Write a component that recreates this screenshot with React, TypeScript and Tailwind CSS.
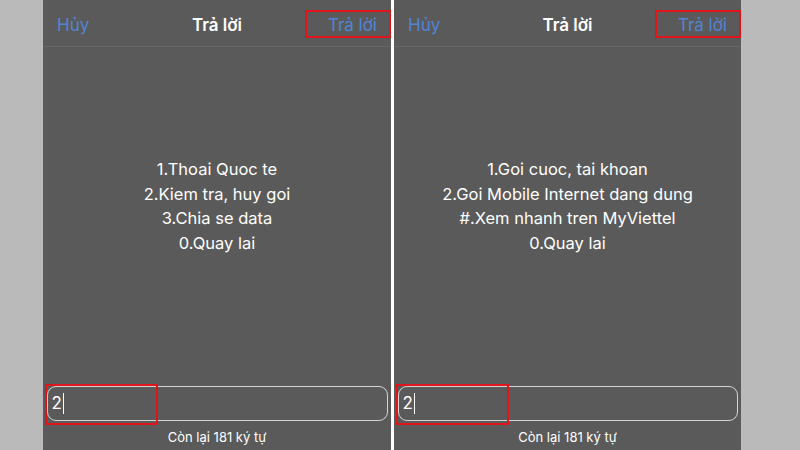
import React from "react";

const font = { fontFamily: "Inter, 'Noto Sans', 'Liberation Sans', sans-serif" };

function Phone({ lines, width }: { lines: string[]; width: string }) {
  return (
    <div className={`relative flex h-full flex-col bg-[#5a5a5a] ${width}`}>
      <div className="relative flex h-[47px] items-center justify-between border-b border-[#676767] px-[14px] pt-[5px]">
        <span className="text-[17px] text-[#5284d6]">Hủy</span>
        <span className="absolute left-1/2 top-[13px] -translate-x-1/2 text-[17px] font-semibold text-white">Trả lời</span>
        <span className="text-[17px] text-[#5284d6]">Trả lời</span>
        <div className="absolute right-0 top-[10px] h-[28px] w-[86px] border-2 border-[#e0141b]" />
      </div>
      <div className="flex flex-col items-center pt-[110px] text-[16.5px] leading-[24.7px] text-white">
        {lines.map((l) => (
          <div key={l}>{l}</div>
        ))}
      </div>
      <div className="flex-1" />
      <div className="relative mx-[3.5px] flex h-[35px] items-center rounded-[9px] border-[1.5px] border-[#d4d4d4] px-[4px]">
        <span className="text-[17px] text-white">2</span>
        <span className="ml-[1px] h-[21px] w-[1.5px] bg-white" />
        <div className="absolute left-[-3px] top-[-3px] h-[41px] w-[113px] border-2 border-[#e0141b]" />
      </div>
      <div className="flex h-[29px] items-center justify-center pt-[5px] text-[13px] text-white">Còn lại 181 ký tự</div>
    </div>
  );
}

export default function App() {
  return (
    <div className="flex h-[450px] w-[800px] overflow-hidden bg-[#bababa]" style={font}>
      <div className="w-[43px]" />
      <Phone width="w-[348px]" lines={["1.Thoai Quoc te", "2.Kiem tra, huy goi", "3.Chia se data", "0.Quay lai"]} />
      <div className="w-[3px] bg-white" />
      <Phone
        width="w-[347px]"
        lines={["1.Goi cuoc, tai khoan", "2.Goi Mobile Internet dang dung", "#.Xem nhanh tren MyViettel", "0.Quay lai"]}
      />
    </div>
  );
}
